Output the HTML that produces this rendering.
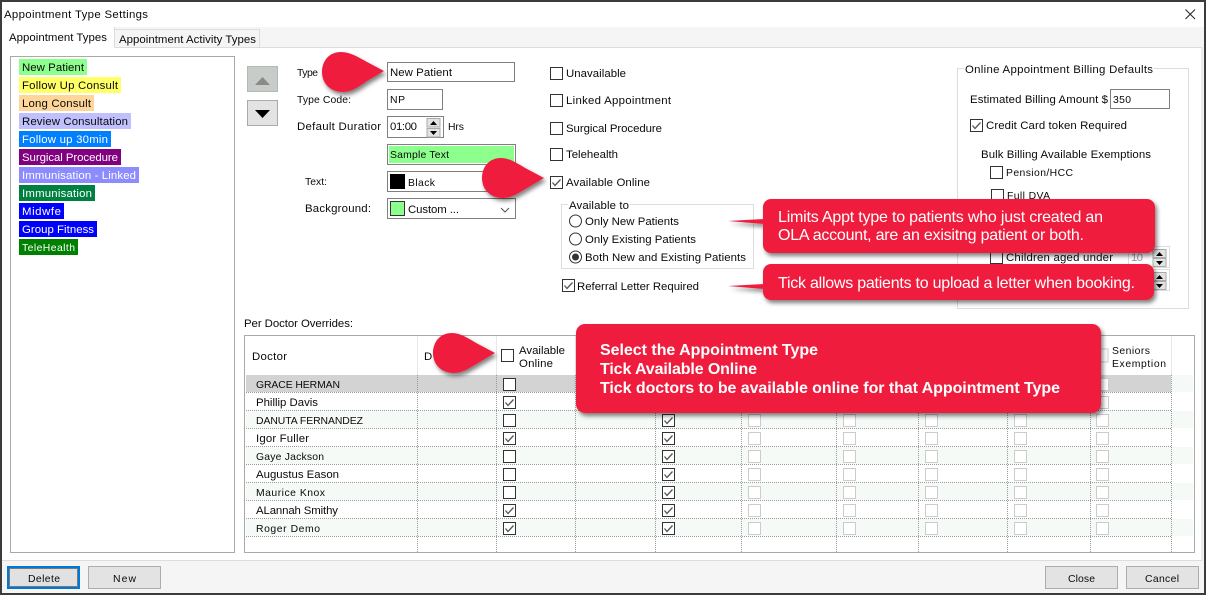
<!DOCTYPE html>
<html><head><meta charset="utf-8"><title>Appointment Type Settings</title>
<style>
html,body{margin:0;padding:0;background:#fff;width:1209px;height:595px;overflow:hidden}
svg{display:block}
text{font-family:"Liberation Sans",sans-serif;font-size:11.4px;fill:#0a0a0a}
text.n{font-size:10.4px}
.w text{fill:#fff}
.c text{font-size:16px;fill:#fff}
.b text{font-size:16px;font-weight:bold;fill:#fff}
</style></head><body>
<svg xmlns="http://www.w3.org/2000/svg" width="1209" height="595" viewBox="0 0 1209 595">
<defs>
<filter id="s" x="-10%" y="-20%" width="120%" height="140%"><feDropShadow dx="2" dy="3" stdDeviation="2" flood-color="#000" flood-opacity="0.5"/></filter>
<symbol id="k" width="13" height="13" overflow="visible"><rect x=".5" y=".5" width="12" height="12" fill="#fff" stroke="#333"/></symbol>
<symbol id="y" width="13" height="13" overflow="visible"><rect x=".5" y=".5" width="12" height="12" fill="#fff" stroke="#333"/><path d="M2.5 6.5L5 9.5L10.5 3.5" fill="none" stroke="#555" stroke-width="1.3"/></symbol>
<symbol id="d" width="13" height="13" overflow="visible"><rect x=".5" y=".5" width="12" height="12" fill="#fff" stroke="#ccc"/></symbol>
</defs>
<rect width="1209" height="595" fill="#fff"/>
<rect x="0" y="0" width="1206" height="595" fill="#3c3c3c"/>
<rect x="2" y="2" width="1202" height="591" fill="#f5f5f5"/>
<rect x="2" y="2" width="1202" height="25" fill="#fff"/>
<text x="4" y="18" textLength="144">Appointment Type Settings</text>
<path d="M1185.5 9.5L1195 19M1195 9.5L1185.5 19" stroke="#222" fill="none"/>
<!-- panel -->
<rect x="2.5" y="47.5" width="1199.5" height="513" fill="#fff" stroke="#ddd"/>
<rect x="2" y="48" width="2" height="512" fill="#fff"/>
<rect x="114.5" y="29.5" width="145" height="18" fill="#f5f5f5" stroke="#ddd"/>
<rect x="2" y="27" width="112" height="21" fill="#fff"/>
<path d="M114.5 27V47" stroke="#ddd"/>
<text x="9" y="41" textLength="98">Appointment Types</text>
<text x="119" y="43" textLength="137">Appointment Activity Types</text>
<!-- list -->
<rect x="10.5" y="56.5" width="224" height="496" fill="#fff" stroke="#aaa"/>
<rect x="19" y="59" width="68" height="16" fill="#8cff8c"/><text x="22" y="71" textLength="62">New Patient</text>
<rect x="19" y="77" width="102" height="16" fill="#ffff66"/><text x="22" y="89" textLength="96">Follow Up Consult</text>
<rect x="19" y="95" width="75" height="16" fill="#ffd699"/><text x="22" y="107" textLength="69">Long Consult</text>
<rect x="19" y="113" width="112" height="16" fill="#c0c0ff"/><text x="22" y="125" textLength="106">Review Consultation</text>
<g class="w">
<rect x="19" y="131" width="92" height="16" fill="#0080ff"/><text x="22" y="143" textLength="86">Follow up 30min</text>
<rect x="19" y="149" width="102" height="16" fill="#800080"/><text x="22" y="161" textLength="96">Surgical Procedure</text>
<rect x="19" y="167" width="120" height="16" fill="#8c8cff"/><text x="22" y="179" textLength="114">Immunisation - Linked</text>
<rect x="19" y="185" width="76" height="16" fill="#008040"/><text x="22" y="197" textLength="70">Immunisation</text>
<rect x="19" y="203" width="45" height="16" fill="#0000ff"/><text x="22" y="215" textLength="39">Midwfe</text>
<rect x="19" y="221" width="78" height="16" fill="#0000ff"/><text x="22" y="233" textLength="72">Group Fitness</text>
<rect x="19" y="239" width="59" height="16" fill="#008000"/><text x="22" y="251" textLength="53" class="n">TeleHealth</text>
</g>
<!-- arrows -->
<rect x="247.5" y="66.5" width="30" height="25" fill="#c8ccc8" stroke="#b5b8b5"/><path d="M255 85L262.5 77L270 85Z" fill="#8a8a8a"/>
<rect x="247.5" y="100.5" width="30" height="25" fill="#e3e3e3" stroke="#aaa"/><path d="M255 110L262.5 118L270 110Z" fill="#000"/>
<!-- form -->
<text x="297" y="76" textLength="21" class="n">Type</text>
<rect x="387.5" y="62.5" width="127" height="19" fill="#fff" stroke="#808080"/><text x="390" y="76" textLength="62">New Patient</text>
<text x="297" y="103" textLength="54" class="n">Type Code:</text>
<rect x="387.5" y="89.5" width="55" height="20" fill="#fff" stroke="#808080"/><text x="390" y="103" textLength="15" class="n">NP</text>
<text x="297" y="130" textLength="84">Default Duratior</text>
<rect x="387.5" y="116.5" width="56" height="21" fill="#fff" stroke="#808080"/><text x="390" y="130" textLength="27">01:00</text>
<rect x="427" y="118.5" width="13" height="8.500" fill="#e3e3e3" stroke="#aaa"/><path d="M430 125L433.500 121L437 125Z" fill="#000"/>
<rect x="427" y="128.500" width="13" height="8.500" fill="#e3e3e3" stroke="#aaa"/><path d="M430 131L433.500 135L437 131Z" fill="#000"/>
<text x="448" y="130" textLength="16" class="n">Hrs</text>
<rect x="387.5" y="144.5" width="128" height="20" fill="#fff" stroke="#808080"/><rect x="389" y="146" width="125" height="17" fill="#8cff8c"/><text x="390" y="158" textLength="59" class="n">Sample Text</text>
<text x="305" y="185" textLength="22" class="n">Text:</text>
<rect x="387.5" y="171.5" width="128" height="20" fill="#fff" stroke="#808080"/><rect x="390" y="174" width="15" height="15" fill="#000"/><text x="408" y="186" textLength="27" class="n">Black</text>
<text x="305" y="212" textLength="66">Background:</text>
<rect x="387.5" y="198.5" width="128" height="20" fill="#fff" stroke="#808080"/><rect x="390.500" y="201.500" width="14" height="14" fill="#8cff8c" stroke="#333"/><text x="408" y="213" textLength="51">Custom ...</text>
<path d="M501 208L505 212L509 208" fill="none" stroke="#555"/>
<!-- checks -->
<use href="#k" x="550" y="67"/><text x="566" y="77" textLength="60">Unavailable</text>
<use href="#k" x="550" y="94"/><text x="566" y="104" textLength="105">Linked Appointment</text>
<use href="#k" x="550" y="122"/><text x="566" y="132" textLength="96">Surgical Procedure</text>
<use href="#k" x="550" y="148"/><text x="566" y="158" textLength="52">Telehealth</text>
<use href="#y" x="550" y="176"/><text x="566" y="186" textLength="84">Available Online</text>
<rect x="561.5" y="204.5" width="192" height="64" fill="#fff" stroke="#ddd"/>
<rect x="568" y="200" width="62" height="8" fill="#fff"/>
<text x="569" y="209" textLength="60">Available to</text>
<circle cx="575.500" cy="221" r="6" fill="#fff" stroke="#333"/><text x="585" y="225" textLength="94">Only New Patients</text>
<circle cx="575.500" cy="239" r="6" fill="#fff" stroke="#333"/><text x="585" y="243" textLength="111">Only Existing Patients</text>
<circle cx="575.500" cy="257" r="6" fill="#fff" stroke="#333"/><circle cx="575.500" cy="257" r="3.500" fill="#333"/><text x="585" y="261" textLength="161">Both New and Existing Patients</text>
<use href="#y" x="562" y="279"/><text x="577" y="290" textLength="122">Referral Letter Required</text>
<!-- billing -->
<rect x="957.5" y="68.5" width="231" height="240" fill="#fff" stroke="#ddd"/>
<rect x="964" y="63" width="190" height="10" fill="#fff"/>
<text x="965" y="73" textLength="188">Online Appointment Billing Defaults</text>
<text x="970" y="103" textLength="138">Estimated Billing Amount $</text>
<rect x="1110.5" y="89.5" width="59" height="19" fill="#fff" stroke="#808080"/><text x="1113" y="103" textLength="18" class="n">350</text>
<use href="#y" x="970" y="119"/><text x="986" y="129" textLength="141">Credit Card token Required</text>
<text x="981" y="158" textLength="170">Bulk Billing Available Exemptions</text>
<use href="#k" x="990" y="166"/><text x="1006" y="176" textLength="67" class="n">Pension/HCC</text>
<use href="#k" x="991" y="189"/><text x="1007" y="199" textLength="43" class="n">Full DVA</text>
<use href="#k" x="990" y="251"/><text x="1006" y="261" textLength="107">Children aged under</text>
<rect x="1128.5" y="246.5" width="41" height="21" fill="#fff" stroke="#ddd"/><text x="1131" y="261" textLength="12" style="fill:#999">10</text>
<rect x="1153" y="249.500" width="13" height="8" fill="#e3e3e3" stroke="#aaa"/><path d="M1156 256L1159.500 252L1163 256Z" fill="#000"/>
<rect x="1153" y="258.500" width="13" height="8" fill="#e3e3e3" stroke="#aaa"/><path d="M1156 261L1159.500 265L1163 261Z" fill="#000"/>
<rect x="1128.5" y="269.5" width="41" height="21" fill="#fff" stroke="#ddd"/>
<rect x="1153" y="272.500" width="13" height="8" fill="#e3e3e3" stroke="#aaa"/><path d="M1156 279L1159.500 275L1163 279Z" fill="#000"/>
<rect x="1153" y="281.500" width="13" height="8" fill="#e3e3e3" stroke="#aaa"/><path d="M1156 284L1159.500 288L1163 284Z" fill="#000"/>
<!-- table -->
<text x="244" y="327" textLength="109">Per Doctor Overrides:</text>
<rect x="244.5" y="335.5" width="950" height="217" fill="#fff" stroke="#aaa"/>
<text x="252" y="360" textLength="35">Doctor</text>
<text x="424" y="360" textLength="8">D</text>
<use href="#k" x="501" y="349"/>
<text x="519" y="354" textLength="46">Available</text><text x="519" y="367" textLength="34">Online</text>
<text x="1112" y="354" textLength="38" class="n">Seniors</text><text x="1112" y="367" textLength="54" class="n">Exemption</text>
<rect x="1096" y="349" width="12" height="13" fill="#fff" stroke="#ccc"/>
<!-- rows bg -->
<rect x="246" y="375" width="925" height="17" fill="#d3d3d3"/><rect x="1172" y="375" width="21" height="17" fill="#f5faf6"/>
<rect x="246" y="411" width="947" height="17" fill="#f5faf6"/>
<rect x="246" y="447" width="947" height="17" fill="#f5faf6"/>
<rect x="246" y="483" width="947" height="17" fill="#f5faf6"/>
<rect x="246" y="519" width="947" height="17" fill="#f5faf6"/>
<g stroke="#e8e8e8"><path d="M417.500 336V375M496.500 336V375M575.500 336V375M655.500 336V375M741.500 336V375M836.500 336V375M918.500 336V375M1007.500 336V375M1090.500 336V375M1171.500 336V375"/></g>
<g stroke="#999" stroke-dasharray="1 1" fill="none">
<path d="M246 392.500H1171M246 410.500H1171M246 428.500H1171M246 446.500H1171M246 464.500H1171M246 482.500H1171M246 500.500H1171M246 518.500H1171M246 536.500H1171"/>
<path d="M417.500 375V552M496.500 375V552M575.500 375V552M655.500 375V552M741.500 375V552M836.500 375V552M918.500 375V552M1007.500 375V552M1090.500 375V552M1171.500 375V552"/>
</g>
<text x="256" y="388" textLength="84" class="n">GRACE HERMAN</text>
<text x="256" y="406" textLength="62">Phillip Davis</text>
<text x="256" y="424" textLength="107" class="n">DANUTA FERNANDEZ</text>
<text x="256" y="442" textLength="53">Igor Fuller</text>
<text x="256" y="460" textLength="68" class="n">Gaye Jackson</text>
<text x="256" y="478" textLength="83">Augustus Eason</text>
<text x="256" y="496" textLength="69" class="n">Maurice Knox</text>
<text x="256" y="514" textLength="82">ALannah Smithy</text>
<text x="256" y="532" textLength="64" class="n">Roger Demo</text>
<use href="#k" x="503" y="378"/><use href="#y" x="503" y="396"/><use href="#k" x="503" y="414"/><use href="#y" x="503" y="432"/><use href="#k" x="503" y="450"/><use href="#k" x="503" y="468"/><use href="#k" x="503" y="486"/><use href="#y" x="503" y="504"/><use href="#y" x="503" y="522"/>
<use href="#y" x="662" y="414"/><use href="#y" x="662" y="432"/><use href="#y" x="662" y="450"/><use href="#y" x="662" y="468"/><use href="#y" x="662" y="486"/><use href="#y" x="662" y="504"/><use href="#y" x="662" y="522"/>
<use href="#d" x="748" y="414"/><use href="#d" x="748" y="432"/><use href="#d" x="748" y="450"/><use href="#d" x="748" y="468"/><use href="#d" x="748" y="486"/><use href="#d" x="748" y="504"/><use href="#d" x="748" y="522"/>
<use href="#d" x="843" y="414"/><use href="#d" x="843" y="432"/><use href="#d" x="843" y="450"/><use href="#d" x="843" y="468"/><use href="#d" x="843" y="486"/><use href="#d" x="843" y="504"/><use href="#d" x="843" y="522"/>
<use href="#d" x="925" y="414"/><use href="#d" x="925" y="432"/><use href="#d" x="925" y="450"/><use href="#d" x="925" y="468"/><use href="#d" x="925" y="486"/><use href="#d" x="925" y="504"/><use href="#d" x="925" y="522"/>
<use href="#d" x="1014" y="414"/><use href="#d" x="1014" y="432"/><use href="#d" x="1014" y="450"/><use href="#d" x="1014" y="468"/><use href="#d" x="1014" y="486"/><use href="#d" x="1014" y="504"/><use href="#d" x="1014" y="522"/>
<use href="#d" x="1096" y="378"/><use href="#d" x="1096" y="396"/><use href="#d" x="1096" y="414"/><use href="#d" x="1096" y="432"/><use href="#d" x="1096" y="450"/><use href="#d" x="1096" y="468"/><use href="#d" x="1096" y="486"/><use href="#d" x="1096" y="504"/><use href="#d" x="1096" y="522"/>
<!-- buttons -->
<rect x="8" y="567" width="71" height="21" fill="#e1e1e1" stroke="#0078d7" stroke-width="2"/>
<rect x="9.500" y="568.500" width="68" height="18" fill="none" stroke="#111" stroke-dasharray="1 1"/>
<text x="28" y="582" textLength="32" class="n">Delete</text>
<rect x="88.500" y="566.500" width="72" height="22" fill="#e3e3e3" stroke="#adadad"/><text x="113" y="582" textLength="23" class="n">New</text>
<rect x="1045.500" y="566.500" width="72" height="22" fill="#e3e3e3" stroke="#adadad"/><text x="1068" y="582" textLength="27" class="n">Close</text>
<rect x="1126.500" y="566.500" width="72" height="22" fill="#e3e3e3" stroke="#adadad"/><text x="1145" y="582" textLength="34" class="n">Cancel</text>
<!-- annotations -->
<g filter="url(#s)" fill="#f01e3c">
<path d="M384 71L367 62C358 57 350 52 341 52C329 52 322 61 322 72C322 84 331 92 343 92C352 92 360 86 367 81Z"/>
<path d="M544 178L527 169C518 164 510 158 501 158C489 158 482 167 482 178C482 190 491 198 503 198C512 198 520 192 527 188Z"/>
<path d="M495 353L478 344C469 339 461 333 452 333C440 333 433 342 433 353C433 365 442 373 454 373C463 373 471 367 478 363Z"/>
<path d="M728 221L764 219V224Z"/>
<path d="M728 286L764 284V289Z"/>
<rect x="763" y="199" width="392" height="54" rx="8"/>
<rect x="763" y="264" width="391" height="36" rx="8"/>
<rect x="576" y="324" width="525" height="89" rx="9"/>
</g>
<g class="c">
<text x="778" y="222" textLength="325">Limits Appt type to patients who just created an</text>
<text x="778" y="240" textLength="306">OLA account, are an exisitng patient or both.</text>
<text x="778" y="288" textLength="357">Tick allows patients to upload a letter when booking.</text>
</g>
<g class="b">
<text x="600" y="355" textLength="218">Select the Appointment Type</text>
<text x="600" y="374" textLength="157">Tick Available Online</text>
<text x="600" y="393" textLength="460">Tick doctors to be available online for that Appointment Type</text>
</g>
</svg>
</body></html>
